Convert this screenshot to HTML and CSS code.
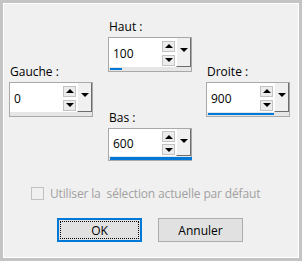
FILE: index.html
```html
<!DOCTYPE html>
<html lang="fr">
<head>
    <meta charset="UTF-8">
    <title>Marges</title>
    <link rel="stylesheet" href="styles.css">
</head>
<body>
    <div class="dialog">
        <div class="fields">
            <div class="col col-side">
                <div class="field">
                    <div class="label">Gauche :</div>
                    <div class="spin">
                        <div class="spin-main">
                            <div class="spin-input">
                                <span class="value">0</span>
                                <div class="arrows">
                                    <span class="arrow-btn"><span class="tri up"></span></span>
                                    <span class="arrow-btn"><span class="tri down"></span></span>
                                </div>
                            </div>
                            <div class="drop"><span class="caret"></span></div>
                        </div>
                        <div class="track"></div>
                    </div>
                </div>
            </div>

            <div class="col col-mid">
                <div class="field">
                    <div class="label">Haut :</div>
                    <div class="spin">
                        <div class="spin-main">
                            <div class="spin-input">
                                <span class="value">100</span>
                                <div class="arrows">
                                    <span class="arrow-btn"><span class="tri up"></span></span>
                                    <span class="arrow-btn"><span class="tri down"></span></span>
                                </div>
                            </div>
                            <div class="drop"><span class="caret"></span></div>
                        </div>
                        <div class="track"><div class="bar" style="width: 12px"></div></div>
                    </div>
                </div>
                <div class="field">
                    <div class="label">Bas :</div>
                    <div class="spin spin-short">
                        <div class="spin-main">
                            <div class="spin-input">
                                <span class="value">600</span>
                                <div class="arrows">
                                    <span class="arrow-btn"><span class="tri up"></span></span>
                                    <span class="arrow-btn"><span class="tri down"></span></span>
                                </div>
                            </div>
                            <div class="drop"><span class="caret"></span></div>
                        </div>
                        <div class="track"><div class="bar" style="width: 82px"></div></div>
                    </div>
                </div>
            </div>

            <div class="col col-side">
                <div class="field">
                    <div class="label">Droite :</div>
                    <div class="spin">
                        <div class="spin-main">
                            <div class="spin-input">
                                <span class="value">900</span>
                                <div class="arrows">
                                    <span class="arrow-btn"><span class="tri up"></span></span>
                                    <span class="arrow-btn"><span class="tri down"></span></span>
                                </div>
                            </div>
                            <div class="drop"><span class="caret"></span></div>
                        </div>
                        <div class="track"><div class="bar" style="width: 66px"></div></div>
                    </div>
                </div>
            </div>
        </div>

        <div class="check">
            <span class="box"></span>
            <span class="check-text">Utiliser la  sélection actuelle par défaut</span>
        </div>

        <div class="buttons">
            <button class="btn btn-ok"><span class="focus">OK</span></button>
            <button class="btn">Annuler</button>
        </div>
    </div>
</body>
</html>
```

FILE: styles.css
```css
* {
    margin: 0;
    padding: 0;
    box-sizing: border-box;
}

body {
    width: 302px;
    height: 261px;
    padding: 3px;
    background-color: #c4c4c4;
    font-family: 'Open Sans', 'Liberation Sans', Arial, sans-serif;
    font-size: 12px;
    color: #000;
}

.dialog {
    height: 255px;
    border: 1px solid #fff;
    background-color: #f0f0f0;
    padding: 15px 0 0 5px;
}

.fields {
    display: flex;
    gap: 15px;
}

.col {
    width: 84px;
    display: flex;
    flex-direction: column;
}

.col-side {
    margin-top: 45px;
}

.col-side:last-child {
    margin-left: -1px;
}

.col-mid {
    gap: 38px;
}

.label {
    height: 16px;
    line-height: 16px;
    margin-bottom: 2px;
    padding-left: 1px;
}

.spin {
    width: 84px;
    height: 35px;
    border: 1px solid #a9a9a9;
    display: flex;
    flex-direction: column;
    background-color: #e6e6e6;
}

.spin-short {
    height: 33px;
}

.spin-main {
    height: 29px;
    display: flex;
}

.spin-short .spin-main {
    height: 27px;
}

.spin-input {
    width: 67px;
    background-color: #fff;
    display: flex;
    align-items: center;
    padding: 2px 1px 0 4px;
}

.value {
    flex: 1;
    line-height: 14px;
}

.arrows {
    display: flex;
    flex-direction: column;
    gap: 3px;
    margin-top: -1px;
}

.spin-short .arrows {
    gap: 2px;
}

.arrow-btn {
    width: 13px;
    height: 11px;
    border: 1px solid #c3c3c3;
    background-color: #ececec;
    display: flex;
    align-items: center;
    justify-content: center;
}

.tri {
    width: 0;
    height: 0;
    border-left: 4px solid transparent;
    border-right: 4px solid transparent;
}

.tri.up {
    border-bottom: 4px solid #000;
}

.tri.down {
    border-top: 4px solid #000;
}

.drop {
    width: 15px;
    background-color: #f0f0f0;
    border-right: 1px solid #6d6d6d;
    border-bottom: 1px solid #6d6d6d;
    border-left: 1px solid #fff;
    display: flex;
    justify-content: center;
    padding-top: 10px;
}

.caret {
    width: 0;
    height: 0;
    border-left: 4px solid transparent;
    border-right: 4px solid transparent;
    border-top: 4px solid #000;
}

.track {
    height: 4px;
    padding: 1px 0 0 1px;
}

.bar {
    height: 2px;
    background-color: #0078d7;
}

.spin-short .bar {
    height: 3px;
}

.check {
    display: flex;
    align-items: center;
    gap: 6px;
    margin: 24px 0 0 22px;
    height: 16px;
}

.box {
    width: 13px;
    height: 13px;
    border: 1px solid #c2c2c2;
    background-color: #f0f0f0;
}

.check-text {
    color: #a0a0a0;
    white-space: pre;
    letter-spacing: -0.15px;
}

.buttons {
    display: flex;
    gap: 16px;
    margin: 17px 0 0 48px;
}

.btn {
    width: 85px;
    height: 24px;
    border: 1px solid #adadad;
    background-color: #e1e1e1;
    font-family: inherit;
    font-size: 12px;
    color: #000;
}

.btn-ok {
    border: 2px solid #0078d7;
    padding: 1px;
}

.focus {
    display: flex;
    height: 100%;
    align-items: center;
    justify-content: center;
    border: 1px dotted #000;
}
```
